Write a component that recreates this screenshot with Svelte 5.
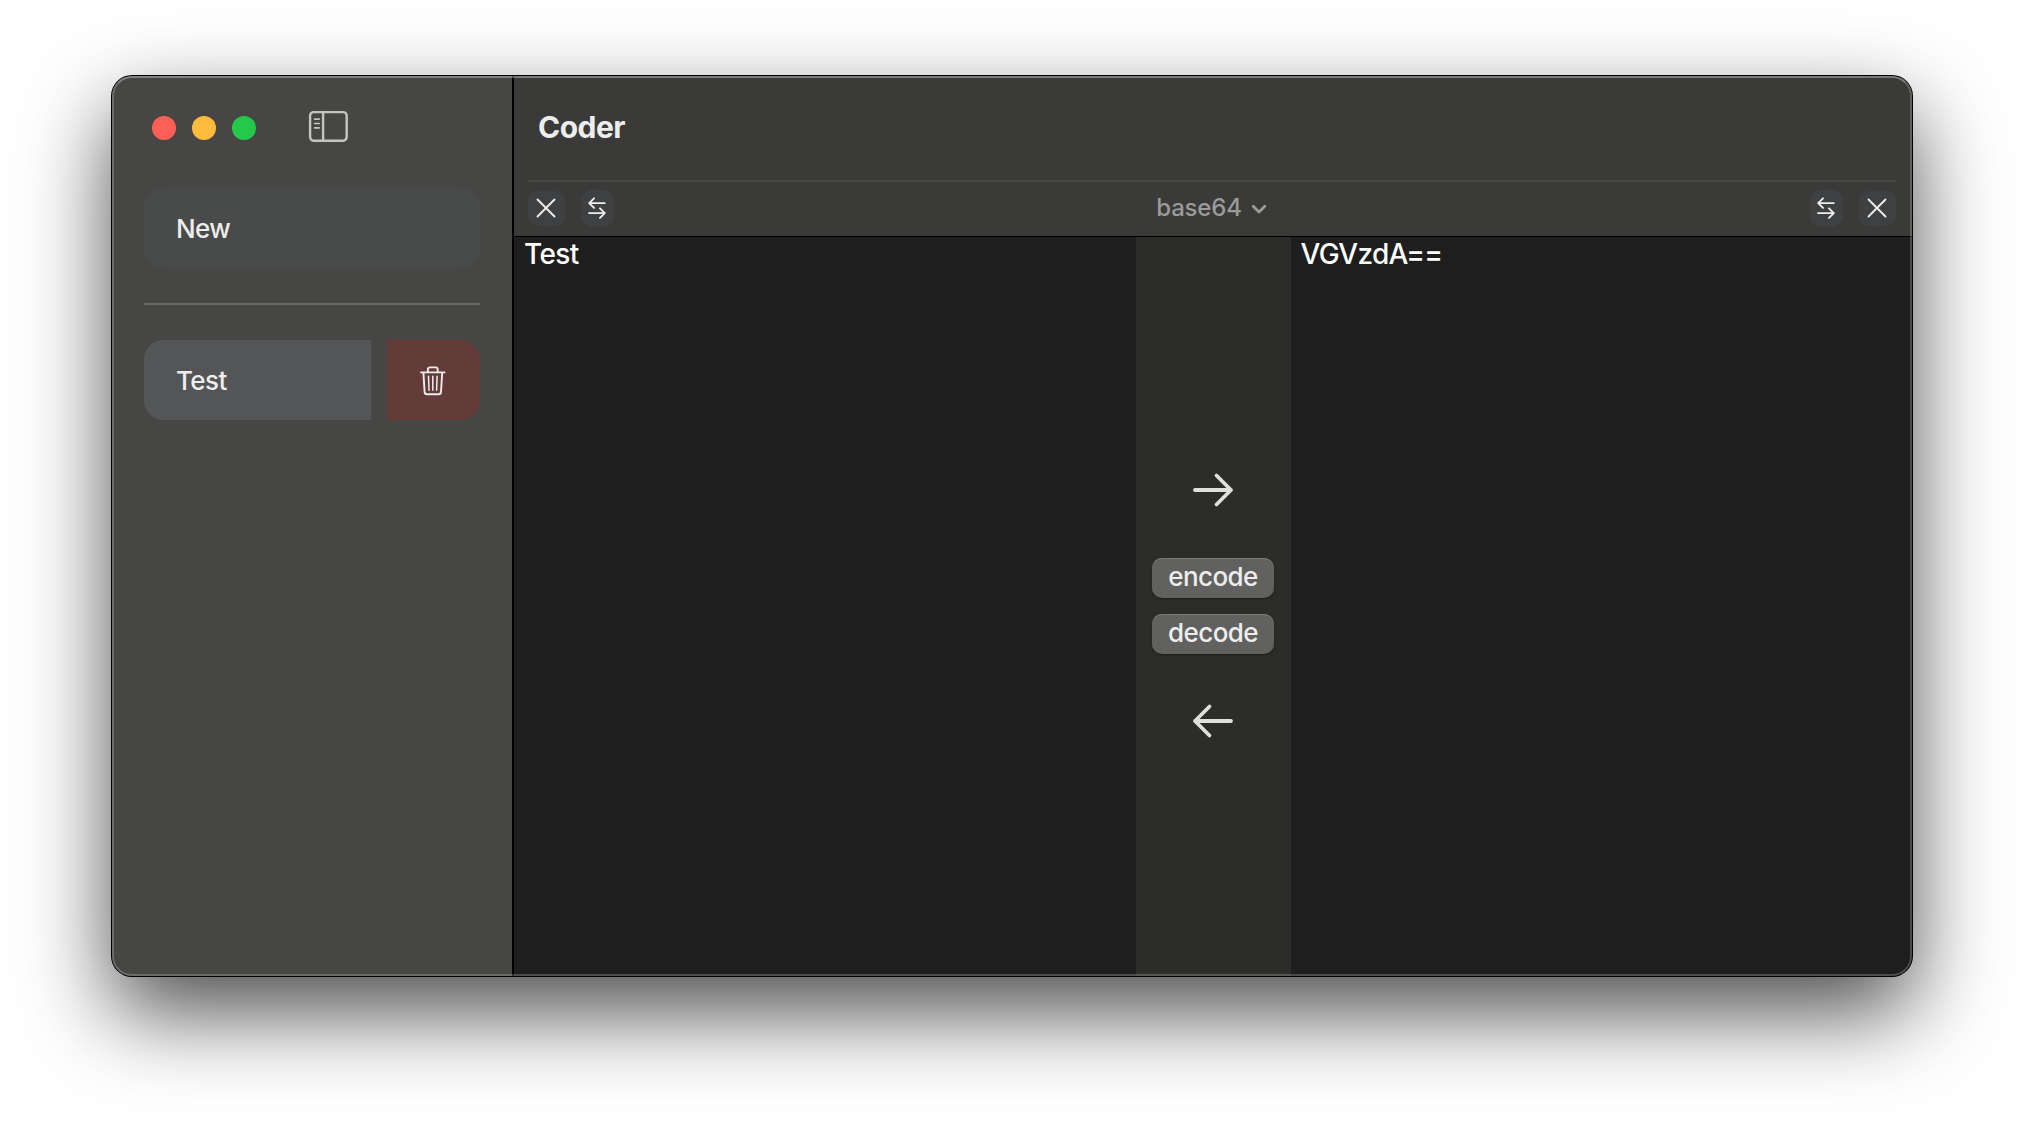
<script lang="ts">
  let left = $state('Test');
  let right = $state('VGVzdA==');
  let items = $state(['Test']);

  const encode = () => (right = btoa(left));
  const decode = () => (left = atob(right));
</script>

{#snippet cross()}
  <svg width="20" height="20" viewBox="0 0 20 20"><path d="M1.5 1.5l17 17M18.5 1.5l-17 17" /></svg>
{/snippet}

{#snippet swap()}
  <svg width="18" height="22" viewBox="0 0 18 22">
    <path d="M16.8 6.1H1.3M6 1.3L1.2 6.1 6 10.9M1 16.1h15.7M12 11.3l4.8 4.8-4.8 4.8" />
  </svg>
{/snippet}

<div class="desktop">
  <div class="window">
    <aside>
      <div class="controls">
        <span class="light close"></span>
        <span class="light minimise"></span>
        <span class="light zoom"></span>
        <svg class="toggle" width="40" height="32" viewBox="0 0 40 32">
          <rect x="2.1" y="2.1" width="36.6" height="28.6" rx="3.6" />
          <path d="M15.1 2v29" />
          <path class="rows" d="M6.6 9.1h4.6M6.6 13.5h4.6M6.6 17.8h4.6" />
        </svg>
      </div>
      <button class="new">New</button>
      <hr />
      {#each items as item}
        <div class="entry">
          <button class="name">{item}</button>
          <button class="delete" aria-label="Delete">
            <svg width="26" height="30" viewBox="0 0 26 30">
              <path d="M1 6.4h23.6M7.9 6V3.4Q7.9 1.4 10 1.4h5.7q2 0 2 2V6M3.4 6.6l1.2 19.3q.2 2.3 2.4 2.3h11.600q2.200 0 2.400-2.300l1.200-19.300" />
              <path class="slots" d="M8.500 10.300l.5 14M12.800 10.300v14M17.100 10.300l-.5 14" />
            </svg>
          </button>
        </div>
      {/each}
    </aside>

    <main>
      <header>
        <h1>Coder</h1>
        <div class="toolbar">
          <div class="group">
            <button class="tool" aria-label="Clear input">{@render cross()}</button>
            <button class="tool tall" aria-label="Swap">{@render swap()}</button>
          </div>
          <button class="codec">
            base64
            <svg width="16" height="11" viewBox="0 0 16 11"><path d="M2.2 2.200L8 8l5.800-5.800" /></svg>
          </button>
          <div class="group">
            <button class="tool tall" aria-label="Swap">{@render swap()}</button>
            <button class="tool" aria-label="Clear output">{@render cross()}</button>
          </div>
        </div>
      </header>
      <div class="panes">
        <section class="pane">{left}</section>
        <section class="middle">
          <svg class="arrow" width="42" height="36" viewBox="0 0 42 36"><path d="M3 18h36M24.500 3.500L39 18 24.500 32.500" /></svg>
          <div class="actions">
            <button onclick={encode}>encode</button>
            <button onclick={decode}>decode</button>
          </div>
          <svg class="arrow" width="42" height="36" viewBox="0 0 42 36"><path d="M39 18H3M17.500 3.500L3 18l14.500 14.500" /></svg>
        </section>
        <section class="pane output">{right}</section>
      </div>
    </main>
  </div>
</div>

<style>
  :global(body) {
    background: #fff;
    overflow: hidden;
  }
  * {
    box-sizing: border-box;
  }
  button {
    border: 0;
    margin: 0;
    padding: 0;
    font: inherit;
    letter-spacing: inherit;
    color: inherit;
    background: none;
  }
  svg {
    display: block;
    fill: none;
    stroke: currentColor;
    stroke-linecap: round;
    stroke-linejoin: round;
    stroke-width: 1.9;
  }
  .desktop {
    width: 2024px;
    height: 1124px;
    padding: 76px 112px 148px;
    overflow: hidden;
    font-family: Inter, 'Liberation Sans', sans-serif;
    font-size: 26px;
    font-weight: 450;
    letter-spacing: -0.6px;
    color: #ecedec;
  }
  .window {
    position: relative;
    display: flex;
    width: 1800px;
    height: 900px;
    border-radius: 20px;
    background: #1e1e1e;
    box-shadow:
      0 0 0 1px #000,
      0 36px 88px rgba(0, 0, 0, 0.7);
  }
  /* light rim over the window's contents */
  .window::after {
    content: '';
    position: absolute;
    inset: 0;
    border: 2px solid rgba(255, 255, 255, 0.2);
    border-top-color: rgba(255, 255, 255, 0.32);
    border-radius: 20px;
    pointer-events: none;
  }
  aside {
    width: 402px;
    padding: 34px 32px 0;
    background: #464644;
    border-right: 2px solid #000;
    border-radius: 20px 0 0 20px;
  }
  .controls {
    display: flex;
    gap: 16px;
    height: 78px;
    padding: 6px 8px 0;
  }
  .light {
    width: 24px;
    height: 24px;
    border-radius: 50%;
  }
  .close {
    background: #ff5f57;
  }
  .minimise {
    background: #febb3c;
  }
  .zoom {
    background: #25c84b;
  }
  .toggle {
    margin: -6px 0 0 36px;
    color: #c4c4c2;
    stroke-width: 2.4;
  }
  .rows {
    stroke-width: 1.7;
  }
  .new {
    display: block;
    width: 336px;
    height: 80px;
    padding-left: 32px;
    text-align: left;
    background: #494b4a;
    border-radius: 20px;
  }
  hr {
    height: 2px;
    margin: 35px 0;
    border: 0;
    background: #696a67;
  }
  .entry {
    display: flex;
    gap: 16px;
    height: 80px;
  }
  .name {
    width: 227px;
    padding-left: 32px;
    text-align: left;
    background: #545557;
    border-radius: 20px 0 0 20px;
  }
  .delete {
    display: flex;
    flex: 1;
    align-items: center;
    justify-content: center;
    padding: 2px 1px 0 0;
    background: #633b39;
    border-radius: 0 20px 20px 0;
  }
  .delete svg {
    stroke-width: 1.9;
  }
  .delete .slots {
    stroke-width: 1.5;
  }
  main {
    display: flex;
    flex: 1;
    flex-direction: column;
  }
  header {
    height: 161px;
    padding: 0 16px 0 14px;
    background: #3a3a38;
    border-bottom: 1px solid #000;
    border-radius: 0 20px 0 0;
  }
  h1 {
    height: 104px;
    margin: 0;
    padding: 33px 10px 0;
    font-size: 30px;
    line-height: 36px;
    font-weight: 650;
    letter-spacing: -0.5px;
  }
  .toolbar {
    display: flex;
    align-items: center;
    justify-content: space-between;
    height: 56px;
    padding-bottom: 2px;
    border-top: 2px solid #474745;
  }
  .group {
    display: flex;
    gap: 16px;
    align-items: center;
  }
  .tool {
    display: flex;
    align-items: center;
    justify-content: center;
    width: 37px;
    height: 35px;
    padding: 0 1px 1px 0;
    border-radius: 10px;
    background: #3f4042;
  }
  .tall {
    width: 33px;
    height: 37px;
  }
  .codec {
    display: flex;
    gap: 9px;
    align-items: center;
    font-size: 24px;
    letter-spacing: -0.2px;
    color: #9b9b99;
    padding: 0 1px 1px 0;
  }
  .codec svg {
    stroke-width: 2.8;
    margin-top: 3px;
  }
  .panes {
    display: flex;
    flex: 1;
  }
  .pane {
    flex: 1;
    padding: 0 10px;
    font-size: 28px;
    line-height: 34px;
    color: #fff;
  }
  .output {
    letter-spacing: -0.7px;
  }
  .middle {
    display: flex;
    flex-direction: column;
    align-items: center;
    gap: 50px;
    width: 155px;
    padding-top: 235px;
    background: #2c2c2a;
  }
  .arrow {
    color: #dfdfde;
    stroke-width: 3.8;
  }
  .arrow:last-child {
    margin-top: -1px;
  }
  .actions {
    display: flex;
    flex-direction: column;
    gap: 16px;
  }
  .actions button {
    width: 122px;
    height: 40px;
    line-height: 38px;
    padding-bottom: 2px;
    border-radius: 10px;
    background: #61615f;
    box-shadow:
      inset 0 1px 0 #7b7b79,
      0 1px 2px rgba(0, 0, 0, 0.4);
  }
</style>
